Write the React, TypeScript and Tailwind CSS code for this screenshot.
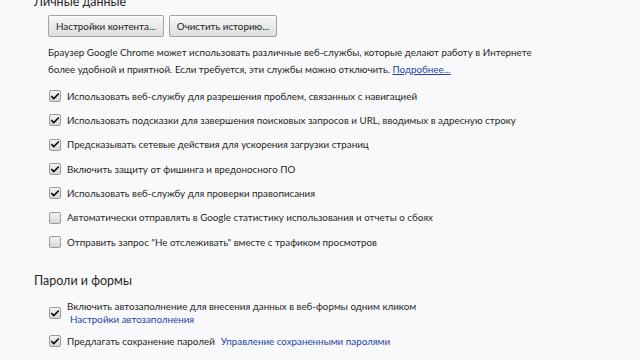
import { Check } from 'lucide-react'

const privacy = [
  { label: 'Использовать веб-службу для разрешения проблем, связанных с навигацией', on: true },
  { label: 'Использовать подсказки для завершения поисковых запросов и URL, вводимых в адресную строку', on: true },
  { label: 'Предсказывать сетевые действия для ускорения загрузки страниц', on: true },
  { label: 'Включить защиту от фишинга и вредоносного ПО', on: true },
  { label: 'Использовать веб-службу для проверки правописания', on: true },
  { label: 'Автоматически отправлять в Google статистику использования и отчеты о сбоях', on: false },
  { label: 'Отправить запрос "Не отслеживать" вместе с трафиком просмотров', on: false },
]

function Box({ on }: { on: boolean }) {
  return (
    <span className="w-[12px] h-[12px] shrink-0 rounded-[2px] border border-[#9a9a9a] bg-gradient-to-b from-[#f4f4f4] to-[#d8d8d8] flex items-center justify-center">
      {on && <Check className="w-[11px] h-[11px] text-[#111]" strokeWidth={4} />}
    </span>
  )
}

function Btn({ children }: { children: React.ReactNode }) {
  return (
    <button className="h-[22px] px-[7px] rounded-[2px] border border-[#a3a3a3] bg-gradient-to-b from-[#f7f7f7] to-[#dedede] text-[9.8px] text-[#222] shadow-[inset_0_1px_0_#fff]">
      {children}
    </button>
  )
}

export default function App() {
  return (
    <div className="w-[640px] h-[360px] overflow-hidden bg-[#f9f9fb] text-[#262626] font-['Lato',sans-serif] text-[9.8px] whitespace-nowrap">
      <div className="pl-[34px]">
        <h2 className="-mt-[6px] text-[12.5px] text-[#262626] leading-[16px]">Личные данные</h2>
        <div className="pl-[14px]">
          <div className="flex gap-[5px] mt-[5px]">
            <Btn>Настройки контента...</Btn>
            <Btn>Очистить историю...</Btn>
          </div>
          <p className="mt-[7px] leading-[17px]">
            Браузер Google Chrome может использовать различные веб-службы, которые делают работу в Интернете
            <br />
            более удобной и приятной. Если требуется, эти службы можно отключить.{' '}
            <a className="text-[#2244aa] underline">Подробнее...</a>
          </p>
          <div className="mt-[6px] flex flex-col">
            {privacy.map((p, i) => (
              <label key={i} className="h-[24.3px] flex items-center gap-[6px] pl-[1px]">
                <Box on={p.on} />
                <span>{p.label}</span>
              </label>
            ))}
          </div>
        </div>
        <h2 className="mt-[19px] text-[12.5px] text-[#262626] leading-[16px]">Пароли и формы</h2>
        <div className="pl-[15px] mt-[11px] flex flex-col gap-[8px]">
          <div className="flex items-center gap-[6px]">
            <Box on />
            <div className="leading-[13px]">
              <div>Включить автозаполнение для внесения данных в веб-формы одним кликом</div>
              <a className="text-[#2244aa] pl-[3px]">Настройки автозаполнения</a>
            </div>
          </div>
          <div className="flex items-center gap-[6px]">
            <Box on />
            <span>Предлагать сохранение паролей</span>
            <a className="text-[#2244aa]">Управление сохраненными паролями</a>
          </div>
        </div>
      </div>
    </div>
  )
}
